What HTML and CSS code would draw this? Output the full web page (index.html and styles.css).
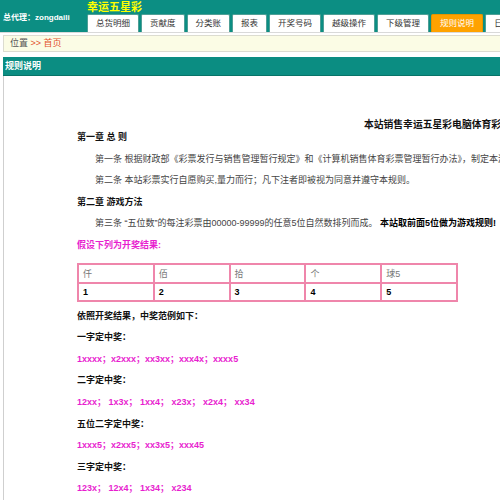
FILE: index.html
```html
<!DOCTYPE html>
<html lang="zh">
<head>
<meta charset="utf-8">
<title>规则说明</title>
<link rel="stylesheet" href="styles.css">
</head>
<body>
<div class="page">
  <header class="top">
    <div class="agent">总代理：zongdaili</div>
    <div class="top-right">
      <div class="brand">幸运五星彩</div>
      <nav class="tabs">
        <a class="tab">总货明细</a>
        <a class="tab">贡献度</a>
        <a class="tab">分类账</a>
        <a class="tab">报表</a>
        <a class="tab">开奖号码</a>
        <a class="tab">越级操作</a>
        <a class="tab">下级管理</a>
        <a class="tab tab-active">规则说明</a>
        <a class="tab">日志</a>
      </nav>
    </div>
  </header>
  <div class="top-line"></div>
  <div class="crumb"><span class="crumb-label">位置</span> <span class="crumb-link">&gt;&gt; 首页</span></div>
  <section class="panel">
    <div class="panel-title">规则说明</div>
    <div class="panel-body">
      <div class="rules">
        <h1 class="rules-title">本站销售幸运五星彩电脑体育彩票游戏规则</h1>
        <p class="chapter">第一章 总 则</p>
        <p class="item">第一条 根据财政部《彩票发行与销售管理暂行规定》和《计算机销售体育彩票管理暂行办法》，制定本游戏规则。</p>
        <p class="item">第二条 本站彩票实行自愿购买,量力而行；凡下注者即被视为同意并遵守本规则。</p>
        <p class="chapter">第二章 游戏方法</p>
        <p class="item">第三条 “五位数”的每注彩票由00000-99999的任意5位自然数排列而成。 <b class="strong">本站取前面5位做为游戏规则!</b></p>
        <p class="hot">假设下列为开奖结果:</p>
        <table class="result">
          <tr class="result-head"><td>仟</td><td>佰</td><td>拾</td><td>个</td><td>球5</td></tr>
          <tr class="result-num"><td>1</td><td>2</td><td>3</td><td>4</td><td>5</td></tr>
        </table>
        <p class="chapter after-table">依照开奖结果，中奖范例如下：</p>
        <p class="chapter">一字定中奖：</p>
        <p class="hot">1xxxx；x2xxx；xx3xx；xxx4x；xxxx5</p>
        <p class="chapter">二字定中奖：</p>
        <p class="hot">12xx； 1x3x； 1xx4； x23x； x2x4； xx34</p>
        <p class="chapter">五位二字定中奖：</p>
        <p class="hot">1xxx5；x2xx5；xx3x5；xxx45</p>
        <p class="chapter">三字定中奖：</p>
        <p class="hot">123x； 12x4； 1x34； x234</p>
      </div>
    </div>
  </section>
</div>
</body>
</html>
```

FILE: styles.css
```css
html, body {
  margin: 0;
  padding: 0;
  overflow: hidden;
  background: #fff;
}

body {
  font-family: "Liberation Sans", "Noto Sans CJK SC", sans-serif;
  font-size: 9px;
  color: #333;
}

.page {
  width: 1000px;
}

/* header */
.top {
  display: flex;
  height: 32px;
  background: #0c8e83;
}

.agent {
  width: 84px;
  padding: 12px 0 0 3px;
  line-height: 12px;
  font-size: 8px;
  font-weight: bold;
  color: #fff;
  white-space: nowrap;
}

.top-right {
  display: flex;
  flex-direction: column;
}

.brand {
  height: 14px;
  line-height: 14px;
  font-size: 11px;
  font-weight: bold;
  color: #ffff00;
}

.tabs {
  display: flex;
  gap: 2px;
}

.tab {
  flex-shrink: 0;
  height: 17px;
  line-height: 17px;
  padding: 0 8px;
  background: #fff;
  border: 1px solid #4e9f96;
  border-bottom: none;
  border-radius: 2px 2px 0 0;
  font-size: 8.5px;
  color: #333;
  white-space: nowrap;
}

.tab-active {
  background: #ffa200;
  border-color: #e59400;
  color: #fff;
}

.top-line {
  height: 1px;
  background: #d9d9d9;
}

/* breadcrumb */
.crumb {
  margin: 2px 0 0 3px;
  height: 15px;
  line-height: 15px;
  padding-left: 6px;
  background: #fbfce5;
  border: 1px solid #dcdcd0;
  font-size: 9px;
}

.crumb-label {
  color: #555;
}

.crumb-link {
  color: #e2502e;
}

/* panel */
.panel {
  margin: 5px 0 0 3px;
}

.panel-title {
  height: 18px;
  line-height: 18px;
  padding-left: 2px;
  background: #0b8d82;
  border-bottom: 1px solid #077468;
  color: #fff;
  font-weight: bold;
  font-size: 9px;
}

.panel-body {
  border-left: 1px solid #cfcfcf;
  padding-top: 43px;
  min-height: 600px;
}

.rules {
  margin-left: 73px;
  width: 760px;
}

.rules-title {
  margin: 0 0 -4px;
  line-height: 12px;
  font-size: 9.8px;
  font-weight: bold;
  color: #111;
  text-align: center;
}

.rules p {
  margin: 0;
  line-height: 21.6px;
  font-size: 9px;
  white-space: nowrap;
}

.chapter {
  font-weight: bold;
  color: #111;
}

.item {
  text-indent: 18px;
  color: #444;
}

.strong {
  color: #000;
}

.hot {
  font-weight: bold;
  color: #e81fcf;
}

.result {
  margin-top: 6px;
  width: 381px;
  border-collapse: collapse;
  border: 2px solid #ef86ab;
  table-layout: fixed;
}

.result td {
  border: 2px solid #ef86ab;
  padding: 0 4px;
  font-size: 9px;
}

.result-head td {
  height: 17px;
  color: #777;
}

.result-num td {
  height: 16px;
  font-weight: bold;
  color: #000;
}

.rules p.after-table {
  margin-top: 4px;
}
```
